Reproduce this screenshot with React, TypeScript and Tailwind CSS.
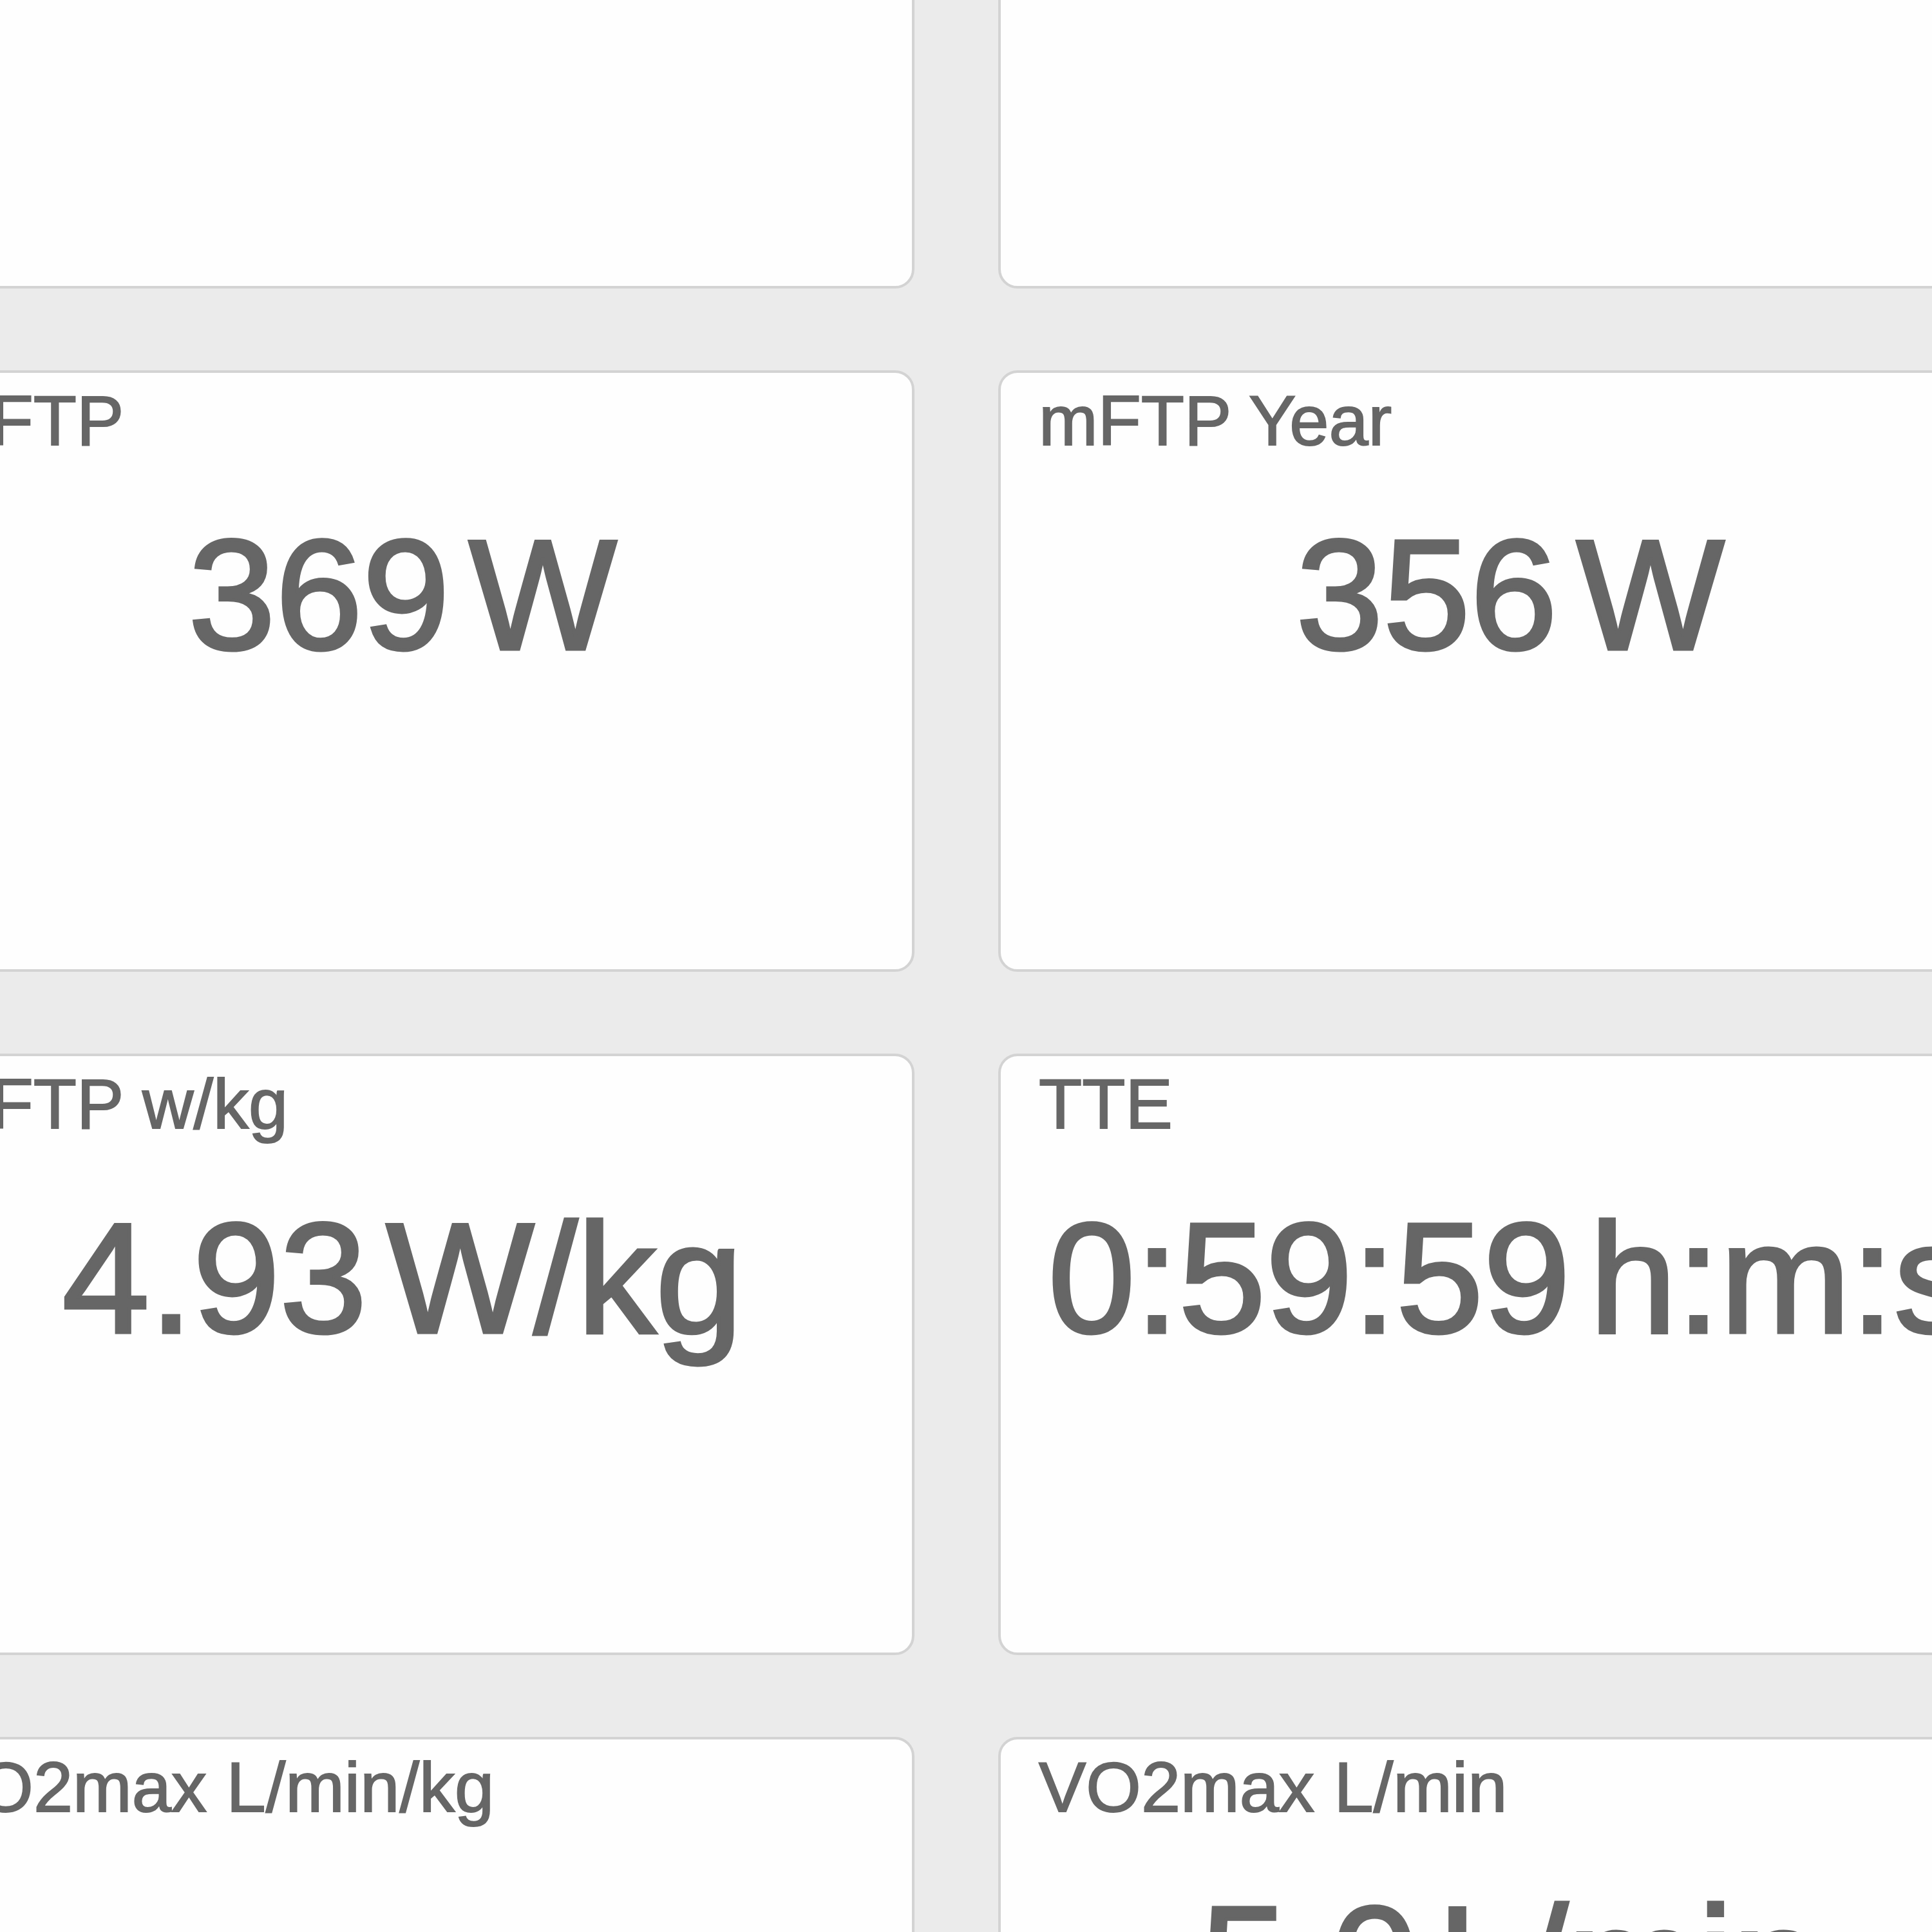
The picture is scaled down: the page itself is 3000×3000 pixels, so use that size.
import React from "react";

interface StatCardProps {
    title?: string;
    value?: string;
    unit?: string;
}

function StatCard({ title, value, unit }: StatCardProps) {
    return (
        <div className="h-[934px] rounded-[30px] border-[4px] border-[#d3d3d3] bg-[#fefefe] px-[59px] pt-[19px] text-[#666666]">
            {title && (
                <div className="whitespace-nowrap text-[110px] leading-none [-webkit-text-stroke:2px_#666666]">
                    {title}
                </div>
            )}
            {value && (
                <div className="mt-[94px] whitespace-nowrap text-center text-[243px] leading-none [-webkit-text-stroke:5px_#666666]">
                    <span>{value}</span>
                    <span className="ml-[30px]">{unit}</span>
                </div>
            )}
        </div>
    );
}

const cards: StatCardProps[] = [
    {},
    {},
    { title: "mFTP", value: "369", unit: "W" },
    { title: "mFTP Year", value: "356", unit: "W" },
    { title: "mFTP w/kg", value: "4.93", unit: "W/kg" },
    { title: "TTE", value: "0:59:59", unit: "h:m:s" },
    { title: "VO2max L/min/kg" },
    { title: "VO2max L/min", value: "5.0", unit: "L/min" },
];

export default function App() {
    return (
        <div
            className="h-[3000px] w-[3000px] overflow-hidden bg-[#ebebeb]"
            style={{ fontFamily: '"Liberation Sans", Arial, Helvetica, sans-serif' }}
        >
            <div className="-ml-[170px] -mt-[486px] grid w-[3310px] grid-cols-[1590px_1590px] gap-x-[130px] gap-y-[127px]">
                {cards.map((c, i) => (
                    <StatCard key={i} {...c} />
                ))}
            </div>
        </div>
    );
}
